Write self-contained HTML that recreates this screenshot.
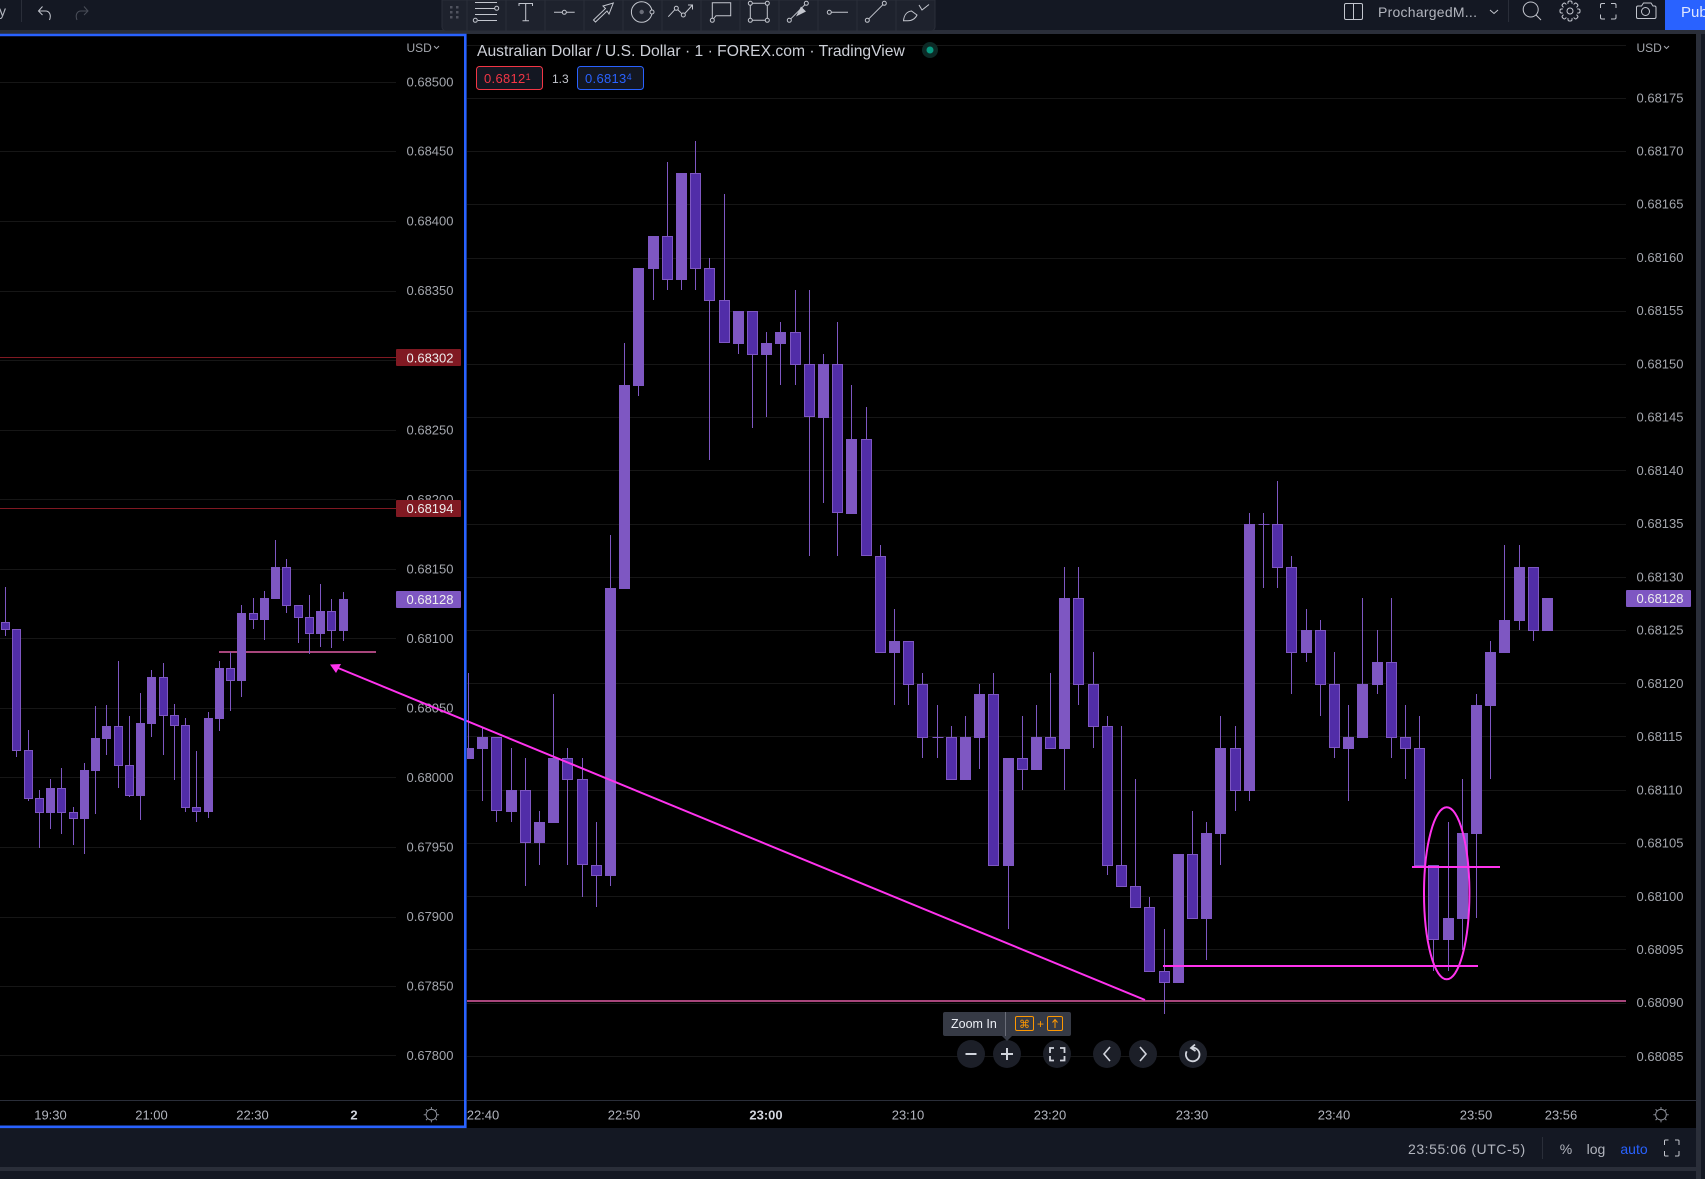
<!DOCTYPE html>
<html><head><meta charset="utf-8"><title>TradingView Chart</title>
<style>
html,body{margin:0;padding:0;background:#2a2e39;width:1705px;height:1179px;overflow:hidden}
svg{display:block;font-family:"Liberation Sans",sans-serif}
.p{font-size:13px;fill:#a3a6ad}
.t{font-size:13px;fill:#b2b5be;text-anchor:middle}
.ic{fill:none;stroke:#c3c6ce;stroke-width:1}
</style></head><body>
<svg width="1705" height="1179" viewBox="0 0 1705 1179" xmlns="http://www.w3.org/2000/svg">
<rect width="1705" height="1179" fill="#2a2e39"/>
<rect width="1705" height="30" fill="#141823"/>
<rect x="1701" y="34" width="4" height="1145" fill="#141823"/>
<rect x="0" y="1128" width="1696" height="39" fill="#141823"/>
<rect x="0" y="1171" width="1696" height="8" fill="#141823"/>
<rect x="0" y="34" width="1696" height="1094" fill="#000"/>

<!-- grid -->
<g stroke="#161616" stroke-width="1" shape-rendering="crispEdges">
<path d="M0 82.5H396M0 151.5H396M0 221.5H396M0 291.5H396M0 360.5H396M0 430.5H396M0 499.5H396M0 569.5H396M0 638.5H396M0 708.5H396M0 777.5H396M0 847.5H396M0 917.5H396M0 986.5H396M0 1055.5H396"/>
<path d="M467 45.5H1626M467 98.5H1626M467 151.5H1626M467 204.5H1626M467 258.5H1626M467 311.5H1626M467 364.5H1626M467 417.5H1626M467 470.5H1626M467 524.5H1626M467 577.5H1626M467 630.5H1626M467 683.5H1626M467 736.5H1626M467 790.5H1626M467 843.5H1626M467 896.5H1626M467 949.5H1626M467 1003.5H1626M467 1056.5H1626"/>
</g>
<path d="M0 1100.5H464M467 1100.5H1696" stroke="#2a2e39"/>

<!-- muted lines behind candles -->
<path d="M219 652H376M467 1001H1626" stroke="#a8467c" stroke-width="2"/>
<path d="M0 357.5H396M0 508.5H396" stroke="#801922" stroke-width="1"/>

<!-- left candles -->
<g transform="translate(.5 0)" stroke="#7e57c2" fill="none"><path d="M5 587V636M16 629V757M28 730V801M39 790V848M50 779V829M61 768V834M73 807V845M84 763V854M95 706V814M106 705V755M118 661V788M129 716V797M140 693V820M151 670V737M163 663V755M174 704V780M185 718V812M196 751V822M208 712V818M219 661V731M230 652V711M241 605V697M253 598V629M264 591V640M275 540V599M286 559V613M298 605V643M309 595V654M320 584V647M331 599V648M343 592V641"/></g>
<path fill="#7e57c2" d="M46 788h9v25h-9zM80 770h9v49h-9zM91 738h9v33h-9zM102 726h9v13h-9zM136 723h9v73h-9zM147 677h9v47h-9zM204 718h9v94h-9zM215 668h9v51h-9zM237 613h9v68h-9zM260 598h9v22h-9zM271 567h9v32h-9zM316 611h9v23h-9zM339 599h9v32h-9z"/>
<g transform="translate(.5 .5)"><path fill="#512da8" stroke="#7e57c2" d="M1 622h8v7h-8zM12 629h8v121h-8zM24 750h8v48h-8zM35 798h8v14h-8zM57 788h8v24h-8zM69 812h8v6h-8zM114 726h8v39h-8zM125 765h8v30h-8zM159 677h8v38h-8zM170 715h8v10h-8zM181 725h8v82h-8zM192 807h8v4h-8zM226 668h8v12h-8zM249 613h8v6h-8zM282 567h8v38h-8zM294 605h8v12h-8zM305 617h8v16h-8zM327 611h8v19h-8z"/></g>

<!-- right candles -->
<g transform="translate(.5 0)" stroke="#7e57c2" fill="none"><path d="M468 673V748M482 728V801M496 737V822M511 748V822M525 758V886M539 811V865M553 694V823M567 748V865M582 758V897M596 822V907M610 535V886M624 343V589M638 268V396M653 236V300M667 162V290M681 173V290M695 141V290M709 258V460M724 194V343M738 311V354M752 311V428M766 332V417M780 322V385M795 290V385M809 290V556M823 354V503M837 322V556M851 385V514M866 407V556M880 545V653M894 609V705M908 641V705M922 673V758M937 705V758M951 726V780M965 716V780M979 684V769M993 673V866M1008 758V929M1022 716V790M1036 705V770M1050 673V749M1064 567V790M1078 567V705M1093 652V748M1107 716V875M1121 726V887M1135 779V908M1149 897V972M1164 929V1014M1192 811V919M1206 822V960M1220 716V865M1235 726V811M1249 513V801M1263 513V588M1277 481V588M1291 556V694M1306 609V662M1320 620V716M1334 652V758M1348 705V801M1362 598V738M1377 630V694M1391 598V758M1405 705V779M1419 716V866M1433 865V971M1448 822V971M1462 779V950M1476 694V918M1490 641V779M1504 545V653M1519 545V630M1533 567V641"/></g>
<path fill="#7e57c2" d="M467 748h7v11h-7zM477 737h11v12h-11zM506 790h11v22h-11zM534 822h11v21h-11zM548 758h11v65h-11zM605 588h11v288h-11zM619 385h11v204h-11zM633 268h11v118h-11zM648 236h11v33h-11zM676 173h11v107h-11zM733 311h11v33h-11zM761 343h11v12h-11zM775 332h11v12h-11zM818 364h11v54h-11zM846 439h11v75h-11zM889 641h11v12h-11zM960 737h11v43h-11zM974 694h11v44h-11zM1003 758h11v108h-11zM1031 737h11v33h-11zM1059 598h11v151h-11zM1173 854h11v129h-11zM1201 833h11v86h-11zM1215 748h11v86h-11zM1244 524h11v267h-11zM1301 630h11v23h-11zM1343 737h11v12h-11zM1357 684h11v54h-11zM1372 662h11v23h-11zM1443 918h11v22h-11zM1457 833h11v86h-11zM1471 705h11v129h-11zM1485 652h11v54h-11zM1499 620h11v33h-11zM1514 567h11v54h-11zM1542 598h11v33h-11z"/>
<g transform="translate(.5 .5)"><path fill="#512da8" stroke="#7e57c2" d="M491 737h10v73h-10zM520 790h10v52h-10zM562 758h10v21h-10zM577 779h10v85h-10zM591 865h10v10h-10zM662 236h10v43h-10zM690 173h10v95h-10zM704 268h10v32h-10zM719 300h10v42h-10zM747 311h10v43h-10zM790 332h10v32h-10zM804 364h10v52h-10zM832 364h10v148h-10zM861 439h10v116h-10zM875 556h10v96h-10zM903 641h10v43h-10zM917 684h10v53h-10zM946 737h10v42h-10zM988 694h10v171h-10zM1017 758h10v11h-10zM1045 737h10v11h-10zM1073 598h10v86h-10zM1088 684h10v42h-10zM1102 726h10v139h-10zM1116 865h10v21h-10zM1130 886h10v21h-10zM1144 907h10v64h-10zM1159 971h10v11h-10zM1187 854h10v64h-10zM1230 748h10v42h-10zM1272 524h10v43h-10zM1286 567h10v85h-10zM1315 630h10v54h-10zM1329 684h10v63h-10zM1386 662h10v75h-10zM1400 737h10v11h-10zM1414 748h10v117h-10zM1428 865h10v74h-10zM1528 567h10v63h-10z"/><path stroke="#7e57c2" d="M932 737H943M1258 524H1269"/></g>

<!-- left price axis -->
<g class="p">
<text x="406.5" y="86.4">0.68500</text><text x="406.5" y="155.5">0.68450</text><text x="406.5" y="225.5">0.68400</text><text x="406.5" y="295">0.68350</text><text x="406.5" y="434.5">0.68250</text><text x="406.5" y="504">0.68200</text><text x="406.5" y="573.5">0.68150</text><text x="406.5" y="643">0.68100</text><text x="406.5" y="712.5">0.68050</text><text x="406.5" y="782">0.68000</text><text x="406.5" y="851.5">0.67950</text><text x="406.5" y="921">0.67900</text><text x="406.5" y="990.5">0.67850</text><text x="406.5" y="1060">0.67800</text>
</g>
<rect x="396" y="349" width="65" height="17" rx="1" fill="#801922"/>
<rect x="396" y="500" width="65" height="17" rx="1" fill="#801922"/>
<rect x="396" y="591" width="65" height="17" rx="1" fill="#7e57c2"/>
<g font-size="13" fill="#eee"><text x="406.5" y="362.5">0.68302</text><text x="406.5" y="513">0.68194</text><text x="406.5" y="604">0.68128</text></g>
<text class="p" x="406.5" y="52" style="font-size:12px">USD</text><path d="M434 46l2.5 2.5 2.5-2.5" fill="none" stroke="#a3a6ad"/>

<!-- right price axis -->
<g class="p">
<text x="1636.5" y="102.4">0.68175</text><text x="1636.5" y="155.5">0.68170</text><text x="1636.5" y="208.7">0.68165</text><text x="1636.5" y="262">0.68160</text><text x="1636.5" y="315.2">0.68155</text><text x="1636.5" y="368.5">0.68150</text><text x="1636.5" y="421.7">0.68145</text><text x="1636.5" y="475">0.68140</text><text x="1636.5" y="528.2">0.68135</text><text x="1636.5" y="581.4">0.68130</text><text x="1636.5" y="634.7">0.68125</text><text x="1636.5" y="688">0.68120</text><text x="1636.5" y="741">0.68115</text><text x="1636.5" y="794.4">0.68110</text><text x="1636.5" y="847.6">0.68105</text><text x="1636.5" y="901">0.68100</text><text x="1636.5" y="954">0.68095</text><text x="1636.5" y="1007">0.68090</text><text x="1636.5" y="1061">0.68085</text>
</g>
<rect x="1626" y="590" width="65" height="17" rx="1" fill="#7e57c2"/>
<text x="1636.5" y="603" font-size="13" fill="#eee">0.68128</text>
<text class="p" x="1636.5" y="52" style="font-size:12px">USD</text><path d="M1664 46l2.5 2.5 2.5-2.5" fill="none" stroke="#a3a6ad"/>

<!-- bright drawings -->
<g stroke="#ff33ee" fill="none" stroke-width="2">
<path d="M332 665.5L1145 1000"/>
<path d="M1163 966H1478M1412 867H1500"/>
<ellipse cx="1446.7" cy="893.3" rx="22.7" ry="86"/>
</g>
<path d="M330 664.5L341 664L336 673Z" fill="#ff33ee"/>

<!-- blue active border -->
<path d="M0 35H465.3V1126.8H0" fill="none" stroke="#2962ff" stroke-width="2.6"/>

<!-- time axis -->
<g class="t"><text x="50.5" y="1119.5">19:30</text><text x="151.5" y="1119.5">21:00</text><text x="252.5" y="1119.5">22:30</text><text x="354" y="1119.5" font-weight="700" fill="#d1d4dc">2</text><text x="483" y="1119.5">22:40</text><text x="624" y="1119.5">22:50</text><text x="766" y="1119.5" font-weight="700" fill="#d1d4dc">23:00</text><text x="908" y="1119.5">23:10</text><text x="1050" y="1119.5">23:20</text><text x="1192" y="1119.5">23:30</text><text x="1334" y="1119.5">23:40</text><text x="1476" y="1119.5">23:50</text><text x="1561" y="1119.5">23:56</text></g>
<g fill="none" stroke="#8a8d96"><circle cx="431.4" cy="1114.7" r="5.3"/><path d="M431.4 1107v2.4M431.4 1120v2.4M423.7 1114.7h2.4M436.7 1114.7h2.4M426 1109.3l1.6 1.6M435.2 1118.5l1.6 1.6M436.8 1109.3l-1.6 1.6M427.6 1118.5l-1.6 1.6"/>
<circle cx="1661" cy="1114.7" r="5.3"/><path d="M1661 1107v2.4M1661 1120v2.4M1653.3 1114.7h2.4M1666.3 1114.7h2.4M1655.6 1109.3l1.6 1.6M1664.8 1118.5l1.6 1.6M1666.4 1109.3l-1.6 1.6M1657.2 1118.5l-1.6 1.6"/></g>

<!-- chart controls -->
<g fill="#1c1f28"><circle cx="971" cy="1054" r="14"/><circle cx="1007" cy="1054" r="14"/><circle cx="1057" cy="1054" r="14"/><circle cx="1107" cy="1054" r="14"/><circle cx="1143" cy="1054" r="14"/><circle cx="1193" cy="1054" r="14"/></g>
<g fill="none" stroke="#d1d4dc" stroke-width="2"><path d="M965.5 1054h11M1001 1054h12M1007 1048v12"/>
<path d="M1050 1053v-5h4M1060 1048h4.500v5M1064.500 1056v4.500h-4.500M1054 1060.500h-4v-4.500" stroke-width="1.800"/>
<path d="M1110 1047l-6 7 6 7M1140 1047l6 7-6 7" stroke-width="1.600"/>
<path d="M1191.500 1047.800a6.800 6.800 0 1 1 -4.800 3.500" stroke-width="1.800"/><path d="M1195 1044.500l-4 3.500 4.500 3" stroke-width="1.800"/></g>

<!-- tooltip -->
<rect x="943" y="1012" width="128" height="24" rx="2" fill="#363a45"/>
<path d="M1002 1036h10l-5 5z" fill="#363a45"/>
<path d="M1005.500 1012v24" stroke="#6a6d78"/>
<text x="951" y="1028" font-size="12.500" fill="#eceff5">Zoom In</text>
<rect x="1015.500" y="1016.500" width="18" height="14" rx="1.500" fill="none" stroke="#ff9800"/>
<rect x="1047.500" y="1016.500" width="15" height="14" rx="1.500" fill="none" stroke="#ff9800"/>
<text x="1024.500" y="1028" font-size="11" fill="#ff9800" text-anchor="middle" font-family="DejaVu Sans">⌘</text>
<text x="1040.500" y="1028" font-size="12" fill="#ff9800" text-anchor="middle">+</text>
<path d="M1055 1028v-8M1052.500 1022.500l2.500-3 2.500 3" fill="none" stroke="#ff9800"/>

<!-- legend -->
<text x="477" y="56" font-size="15.670" fill="#cdd0d8">Australian Dollar / U.S. Dollar · 1 · FOREX.com · TradingView</text>
<circle cx="930" cy="50" r="8" fill="#0c2a26"/><circle cx="930" cy="50" r="3.500" fill="#089981"/>
<rect x="476.500" y="66.500" width="66" height="23" rx="3" fill="#131722" stroke="#f23645"/>
<rect x="577.500" y="66.500" width="66" height="23" rx="3" fill="#131722" stroke="#2962ff"/>
<text x="484" y="83" font-size="13" letter-spacing=".3" fill="#f23645">0.6812<tspan font-size="9" dy="-3">1</tspan></text>
<text x="585" y="83" font-size="13" letter-spacing=".3" fill="#2962ff">0.6813<tspan font-size="9" dy="-3">4</tspan></text>
<text x="552" y="83" font-size="12" fill="#c3c6ce">1.3</text>

<!-- top bar left -->
<text x="-1" y="16" font-size="14" fill="#b2b5be">y</text>
<path d="M21.500 0V22" stroke="#2a2e39"/>
<path d="M49.500 20c2-5 0-9-4-9h-6M42.500 6.500l-4 4.500 4 4" class="ic"/>
<path d="M77 20c-2-5 0-9 4-9h6M84 6.500l4 4.500-4 4" fill="none" stroke="#4a4e59"/>

<!-- floating toolbar -->
<path d="M442 0H935V27a4 4 0 0 1-4 4H446a4 4 0 0 1-4-4Z" fill="#1e222d" stroke="#2a2e39"/>
<path d="M467 0v31M506 0v31M545 0v31M584 0v31M623 0v31M662 0v31M701 0v31M740 0v31M779 0v31M818 0v31M857 0v31M896 0v31" stroke="#2a2e39"/>
<g fill="#50535e"><rect x="450" y="6" width="2.500" height="2.500"/><rect x="456" y="6" width="2.500" height="2.500"/><rect x="450" y="11" width="2.500" height="2.500"/><rect x="456" y="11" width="2.500" height="2.500"/><rect x="450" y="16" width="2.500" height="2.500"/><rect x="456" y="16" width="2.500" height="2.500"/></g>
<g class="ic">
<path d="M475 2.500H497M475 8.500H494.500M475 14.500H497M478 20.500H497"/><circle cx="496.700" cy="8.300" r="2" /><circle cx="475.300" cy="20.300" r="2"/>
<path d="M519 6V3.500H532.500V6M525.700 3.500V20.800M522.500 20.800H529"/>
<path d="M554 12.300H562M566.500 12.300H574.700"/><circle cx="564.300" cy="12.300" r="2"/>
<path d="M593.500 20L595.500 22L607 11L609 14L613.300 3L603 6L605.500 8.500Z"/>
<circle cx="641.700" cy="12" r="10.300"/><circle cx="652" cy="12" r="2" fill="#1e222d"/>
<path d="M668.300 16.700L674.700 9.800M677.600 9.500L681.800 13.700M684.800 13.500L692.500 5M688 5H692.500V9.500"/><circle cx="676.300" cy="8.300" r="2"/><circle cx="683.300" cy="15" r="2"/>
<path d="M712.300 18V2.700H730.700V15.700H716L713.800 18.500"/><circle cx="712.300" cy="20.300" r="2"/>
<path d="M750.300 5.300V18.300M767.300 5.300V18.300M752.300 3.300H765.300M752.300 20.300H765.300"/><circle cx="750.300" cy="3.300" r="2"/><circle cx="767.300" cy="3.300" r="2"/><circle cx="750.300" cy="20.300" r="2"/><circle cx="767.300" cy="20.300" r="2"/>
<path d="M790.800 18.800L804.800 4.800"/><circle cx="789.300" cy="20.300" r="2"/><circle cx="806.300" cy="3.300" r="2"/>
<circle cx="829.300" cy="12.300" r="2"/><path d="M831.300 12.300H848"/>
<path d="M868.800 18.800L882.800 4.800"/><circle cx="867.300" cy="20.300" r="2"/><circle cx="884.300" cy="3.300" r="2"/>
<path d="M903.500 20.700C904 15 907 11.500 911.500 11L917 15C915.500 18.500 912 20.700 908 20.700ZM919 5L922 10L929 4.500"/>
</g>
<path d="M796 16.500L801 6.500L806 11.500Z" fill="#c3c6ce"/>
<circle cx="641.700" cy="12" r="2.200" fill="#6a6d78"/>

<!-- top bar right -->
<g class="ic">
<rect x="1344.500" y="3.500" width="18" height="16" rx="1.500"/><path d="M1353.500 3.500v16"/>
<path d="M1490 10l4 3.500 4-3.500"/>
<circle cx="1530.700" cy="9.500" r="7.500"/><path d="M1536 15l5 5"/>
<rect x="1568" y="1" width="4" height="20" rx="1.500"/><rect x="1568" y="1" width="4" height="20" rx="1.500" transform="rotate(45 1570 11)"/><rect x="1568" y="1" width="4" height="20" rx="1.500" transform="rotate(90 1570 11)"/><rect x="1568" y="1" width="4" height="20" rx="1.500" transform="rotate(135 1570 11)"/>
<circle cx="1570" cy="11" r="7.500" fill="#141823" stroke="none"/><circle cx="1570" cy="11" r="3"/>
<path d="M1600.500 8V5a1.500 1.500 0 0 1 1.500-1.500h3M1611 3.500h3.500a1.500 1.500 0 0 1 1.500 1.500v3M1616 14.500v3a1.500 1.500 0 0 1-1.500 1.500h-3.500M1605 19h-3a1.500 1.500 0 0 1-1.500-1.500v-3"/>
<path d="M1636.500 7.500a1.500 1.500 0 0 1 1.500-1.500h3.500l2-3h7.500l2 3h1.500a1.500 1.500 0 0 1 1.500 1.500v9.500a1.500 1.500 0 0 1-1.500 1.500h-16.500a1.500 1.500 0 0 1-1.500-1.500Z"/><circle cx="1645.500" cy="11.500" r="4"/>
</g>
<path d="M1508.500 0V22" stroke="#2a2e39"/>
<text x="1378" y="17" font-size="14" letter-spacing=".25" fill="#b2b5be">ProchargedM...</text>
<rect x="1665" y="0" width="40" height="30" fill="#2962ff"/>
<text x="1681" y="17" font-size="15" fill="#dfe6ff">Pub</text>

<!-- bottom bar -->
<text x="1408" y="1154" font-size="14" letter-spacing=".55" fill="#b2b5be">23:55:06 (UTC-5)</text>
<path d="M1542.500 1137v22" stroke="#2a2e39"/>
<text x="1566" y="1154" font-size="14" fill="#b2b5be" text-anchor="middle">%</text>
<text x="1596" y="1154" font-size="14" fill="#b2b5be" text-anchor="middle">log</text>
<text x="1634" y="1154" font-size="14" fill="#2962ff" text-anchor="middle">auto</text>
<path class="ic" d="M1664.500 1145v-4a1 1 0 0 1 1-1h3M1675 1140h3a1 1 0 0 1 1 1v4M1679 1151v4a1 1 0 0 1-1 1h-3M1668.500 1156h-3a1 1 0 0 1-1-1v-4"/>
</svg>
</body></html>
